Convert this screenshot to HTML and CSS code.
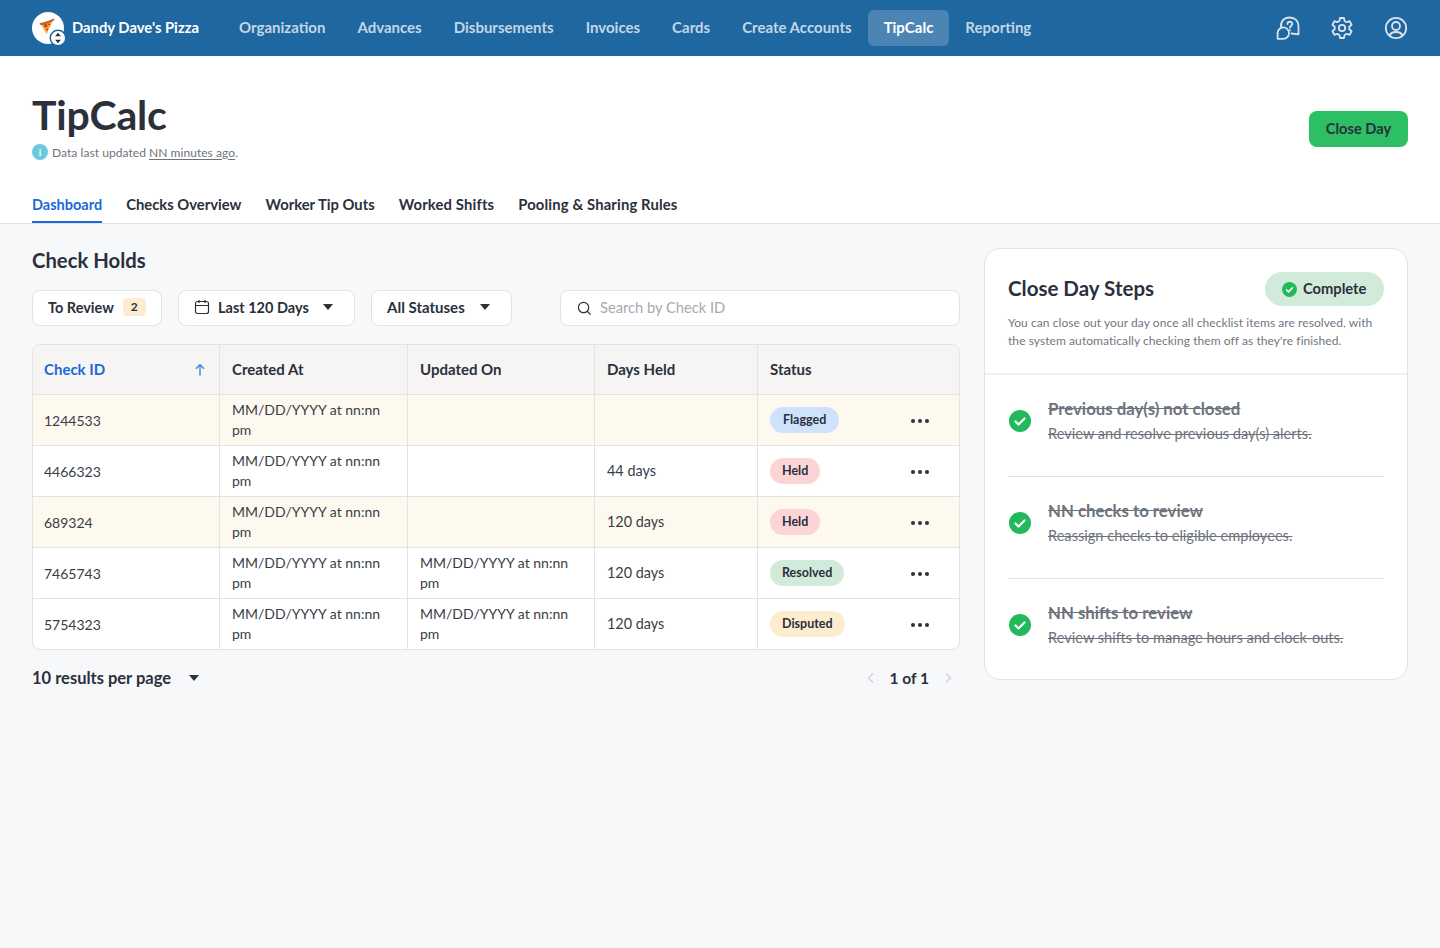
FILE: index.html
```html
<!DOCTYPE html>
<html lang="en">
<head>
<meta charset="utf-8">
<title>TipCalc</title>
<link rel="stylesheet" href="styles.css">
</head>
<body>
<header class="topbar">
  <div class="brand">
    <span class="logo">
      <svg class="pizza" viewBox="0 0 20 20"><path d="M1.500 6.500 17 1.500 9 19Z" fill="#f2b441"/><path d="M.8 5.800C6 5.200 12 3.500 16.500.5l2 1.800C13 6 7 7.800 2 8.500Z" fill="#c4602b"/><circle cx="8" cy="9" r="2.200" fill="#d63f2c"/><circle cx="12" cy="7.500" r="1.300" fill="#d63f2c"/><circle cx="9.500" cy="13.500" r="1.300" fill="#d63f2c"/></svg>
      <span class="switch"><svg viewBox="0 0 12 12"><path d="M6 1.500 8.500 4.500h-5ZM6 10.500 3.500 7.500h5Z" fill="#2a303c"/></svg></span>
    </span>
    <span class="brand-name">Dandy Dave's Pizza</span>
  </div>
  <nav class="mainnav">
    <a>Organization</a><a>Advances</a><a>Disbursements</a><a>Invoices</a><a>Cards</a><a>Create Accounts</a><a class="active">TipCalc</a><a>Reporting</a>
  </nav>
  <div class="topicons">
    <svg viewBox="0 0 24 24"><path d="M5 11C4.500 5.500 8 1.500 13.500 1.500c5.500 0 9 3.500 9 8.500v8.300l-7-.8" stroke-linejoin="round"/><path d="M11.500 8c0-3 4.800-3 4.800-.1 0 1.800-2.300 2-2.300 3.800M14 14.200v.1"/><path d="M1.600 22.800V17.500a5.700 5.700 0 1 1 5.700 5.300Z" stroke-linejoin="round"/></svg>
    <svg viewBox="0 0 24 24"><path d="M10 2h4l.6 3 2.100 1.200 2.900-1 2 3.500-2.300 2v2.600l2.300 2-2 3.500-2.900-1-2.100 1.200-.6 3h-4l-.6-3-2.100-1.200-2.900 1-2-3.500 2.300-2v-2.600l-2.300-2 2-3.500 2.900 1L9.400 5Z" stroke-linejoin="round"/><circle cx="12" cy="12" r="3.200"/></svg>
    <svg viewBox="0 0 24 24"><circle cx="12" cy="12" r="10.200"/><circle cx="12" cy="10" r="4"/><path d="M5.500 19.500c1-2.500 3-3.500 6.500-3.500s5.500 1 6.500 3.500"/></svg>
  </div>
</header>

<section class="pagehead">
  <div class="titlerow">
    <div>
      <h1>TipCalc</h1>
      <p class="updated"><span class="info">i</span>Data last updated <u>NN minutes ago</u>.</p>
    </div>
    <button class="closeday">Close Day</button>
  </div>
  <div class="tabs">
    <a class="active">Dashboard</a><a>Checks Overview</a><a>Worker Tip Outs</a><a>Worked Shifts</a><a>Pooling &amp; Sharing Rules</a>
  </div>
</section>

<main class="content">
  <section class="holds">
    <h2>Check Holds</h2>
    <div class="filters">
      <button class="filter f-review">To Review <span class="count">2</span></button>
      <button class="filter f-days"><svg class="cal" viewBox="0 0 16 16"><rect x="1.500" y="2.500" width="13" height="12" rx="2"/><path d="M1.500 6.500h13M5 1v3M11 1v3"/></svg>Last 120 Days<span class="caret"></span></button>
      <button class="filter f-status">All Statuses<span class="caret"></span></button>
      <div class="search"><svg viewBox="0 0 16 16"><circle cx="7" cy="7" r="5.500"/><path d="m11 11 3.500 3.500"/></svg><span>Search by Check ID</span></div>
    </div>
    <div class="tablewrap">
      <table>
        <colgroup><col class="c1"><col class="c2"><col class="c3"><col class="c4"><col class="c5"></colgroup>
        <thead><tr>
          <th class="sorted"><span class="thflex">Check ID<svg viewBox="0 0 12 12"><path d="M6 11V1.500M2.500 5 6 1.500 9.500 5"/></svg></span></th>
          <th>Created At</th><th>Updated On</th><th>Days Held</th><th>Status</th>
        </tr></thead>
        <tbody>
          <tr class="warn"><td>1244533</td><td>MM/DD/YYYY at nn:nn pm</td><td></td><td></td><td><div class="st"><span class="pill flagged">Flagged</span><span class="dots"><i></i><i></i><i></i></span></div></td></tr>
          <tr><td>4466323</td><td>MM/DD/YYYY at nn:nn pm</td><td></td><td>44 days</td><td><div class="st"><span class="pill held">Held</span><span class="dots"><i></i><i></i><i></i></span></div></td></tr>
          <tr class="warn"><td>689324</td><td>MM/DD/YYYY at nn:nn pm</td><td></td><td>120 days</td><td><div class="st"><span class="pill held">Held</span><span class="dots"><i></i><i></i><i></i></span></div></td></tr>
          <tr><td>7465743</td><td>MM/DD/YYYY at nn:nn pm</td><td>MM/DD/YYYY at nn:nn pm</td><td>120 days</td><td><div class="st"><span class="pill resolved">Resolved</span><span class="dots"><i></i><i></i><i></i></span></div></td></tr>
          <tr><td>5754323</td><td>MM/DD/YYYY at nn:nn pm</td><td>MM/DD/YYYY at nn:nn pm</td><td>120 days</td><td><div class="st"><span class="pill disputed">Disputed</span><span class="dots"><i></i><i></i><i></i></span></div></td></tr>
        </tbody>
      </table>
    </div>
    <div class="pager">
      <div class="perpage">10 results per page<span class="caret"></span></div>
      <div class="pages">
        <svg viewBox="0 0 10 12"><path d="M7 1.500 2.500 6 7 10.500"/></svg>
        <span>1 of 1</span>
        <svg viewBox="0 0 10 12"><path d="M3 1.500 7.500 6 3 10.500"/></svg>
      </div>
    </div>
  </section>

  <aside class="steps">
    <div class="stepshead">
      <div class="stepstop">
        <h2>Close Day Steps</h2>
        <span class="complete"><svg class="chk small" viewBox="0 0 22 22"><circle cx="11" cy="11" r="11"/><path d="m6.500 11.500 3 3 6-6"/></svg>Complete</span>
      </div>
      <p>You can close out your day once all checklist items are resolved, with the system automatically checking them off as they're finished.</p>
    </div>
    <ul class="steplist">
      <li><svg class="chk" viewBox="0 0 22 22"><circle cx="11" cy="11" r="11"/><path d="m6.500 11.500 3 3 6-6"/></svg><div><b>Previous day(s) not closed</b><span>Review and resolve previous day(s) alerts.</span></div></li>
      <li><svg class="chk" viewBox="0 0 22 22"><circle cx="11" cy="11" r="11"/><path d="m6.500 11.500 3 3 6-6"/></svg><div><b>NN checks to review</b><span>Reassign checks to eligible employees.</span></div></li>
      <li><svg class="chk" viewBox="0 0 22 22"><circle cx="11" cy="11" r="11"/><path d="m6.500 11.500 3 3 6-6"/></svg><div><b>NN shifts to review</b><span>Review shifts to manage hours and clock-outs.</span></div></li>
    </ul>
  </aside>
</main>
</body>
</html>
```
FILE: styles.css
```css
* { box-sizing: border-box; }
html, body { margin: 0; height: 100%; }
body {
  font-family: "Lato", "Noto Sans", sans-serif;
  color: #2a303c;
  background: #f7f8fa;
  font-size: 15px;
}
button { font: inherit; color: inherit; cursor: pointer; }
h1, h2, p, ul { margin: 0; padding: 0; }

/* top bar */
.topbar {
  height: 56px;
  background: #1f67a0;
  display: flex;
  align-items: center;
  padding: 0 32px;
}
.brand { display: flex; align-items: center; gap: 8px; width: 191px; flex: none; }
.logo { width: 32px; height: 32px; border-radius: 50%; background: #fff; display: flex; position: relative; align-items: center; justify-content: center; }
.pizza { width: 17px; height: 17px; margin: -4px 0 0 -1px; }
.switch { position: absolute; right: -1px; bottom: -1px; width: 14px; height: 14px; border-radius: 50%; background: #fff; box-shadow: 0 0 0 1.500px #1f67a0; display: flex; }
.brand-name { color: #fff; font-weight: 700; font-size: 14.800px; white-space: nowrap; padding-bottom: 2px; }
.mainnav { display: flex; flex: 1; }
.mainnav a { color: #c3d6e6; font-weight: 700; font-size: 15px; height: 36px; line-height: 34px; padding: 0 16px; border-radius: 6px; white-space: nowrap; }
.mainnav a.active { background: #4c85b3; color: #fff; }
.topicons { display: flex; gap: 30px; }
.topicons svg { width: 24px; height: 24px; fill: none; stroke: #d9e4ee; stroke-width: 1.800; stroke-linecap: round; }

/* page head */
.pagehead { background: #fff; border-bottom: 1px solid #dfe1e4; padding: 0 32px; height: 168px; display: flex; flex-direction: column; }
.titlerow { display: flex; justify-content: space-between; align-items: flex-start; padding-top: 34px; height: 133px; }
h1 { font-size: 41px; line-height: 50px; font-weight: 700; letter-spacing: -.2px; }
.updated { display: flex; align-items: center; font-size: 12px; letter-spacing: .06px; color: #6d737d; height: 16px; margin-top: 4px; }
.updated u { text-underline-offset: 2px; margin-left: 3px; }
.info { width: 16px; height: 16px; border-radius: 50%; background: #6cc9dc; color: #fff; font-size: 10px; font-weight: 700; text-align: center; line-height: 16px; margin-right: 4px; }
.closeday { background: #2cbf63; border: 0; border-radius: 8px; width: 99px; height: 36px; font-weight: 700; font-size: 14.700px; margin-top: 21px; padding: 0 0 2px; }
.tabs { display: flex; gap: 24px; }
.tabs a { font-size: 14.800px; font-weight: 700; height: 35px; line-height: 33px; white-space: nowrap; }
.tabs a:nth-child(4) { letter-spacing: .15px; }
.tabs a:nth-child(5) { letter-spacing: .15px; }
.tabs a.active { color: #1a6ad9; border-bottom: 2px solid #1a6ad9; font-size: 14.500px; }

/* content */
.content { display: grid; grid-template-columns: 928px 424px; gap: 24px; padding: 24px 32px; align-items: start; }
.holds h2 { font-size: 20.300px; font-weight: 700; line-height: 24px; }
.filters { display: flex; margin-top: 18px; height: 36px; }
.filter { background: #fff; border: 1px solid #e1e3e6; border-radius: 8px; height: 36px; font-weight: 700; font-size: 14.500px; display: flex; align-items: center; padding: 0 15px 2px; white-space: nowrap; }
.f-review { width: 130px; }
.f-days { width: 177px; margin-left: 16px; }
.f-status { width: 141px; margin-left: 16px; font-size: 15px; }
.count { background: #fcedd0; border-radius: 4px; width: 23px; height: 18px; font-size: 12px; font-weight: 700; line-height: 17px; margin-left: 9px; text-align: center; }
.cal { width: 16px; height: 16px; fill: none; stroke: #2a303c; stroke-width: 1.200; margin-right: 8px; }
.caret { width: 0; height: 0; border: 5.500px solid transparent; border-top: 6px solid #2a303c; border-bottom: 0; margin-left: auto; margin-right: 6px; }
.search { width: 400px; margin-left: 48px; background: #fff; border: 1px solid #e1e3e6; border-radius: 8px; display: flex; align-items: center; padding: 0 16px 2px; color: #a6aab0; font-size: 14.700px; }
.search svg { width: 15px; height: 15px; fill: none; stroke: #2a303c; stroke-width: 1.300; margin: 2px 8px 0 0; flex: none; }

.tablewrap { margin-top: 18px; background: #fff; border: 1px solid #e1e3e6; border-radius: 8px; overflow: hidden; }
table { border-collapse: separate; border-spacing: 0; table-layout: fixed; width: 926px; }
.c1 { width: 187px; } .c2 { width: 188px; } .c3 { width: 187px; } .c4 { width: 163px; } .c5 { width: 201px; }
th, td { text-align: left; padding: 0 12px; border-right: 1px solid #e1e3e6; border-bottom: 1px solid #e1e3e6; font-size: 14px; }
th:first-child, td:first-child { padding-left: 11px; }
th:last-child, td:last-child { border-right: 0; }
tbody tr:last-child td { border-bottom: 0; }
th { background: #f6f5f4; height: 50px; font-weight: 700; font-size: 15px; padding-bottom: 2px; }
td { height: 51px; line-height: 20px; font-weight: 400; color: #383e49; padding-bottom: 1px; }
td:first-child { padding-top: 1px; padding-bottom: 0; }
td:nth-child(4) { font-size: 14.400px; padding-bottom: 0; }
td:last-child { padding-bottom: 0; }
tbody tr:last-child td { height: 50px; }
.warn td { background: #fef9ee; }
.sorted { color: #1a6ad9; }
.thflex { display: flex; justify-content: space-between; align-items: center; }
.thflex svg { width: 14px; height: 14px; fill: none; stroke: #3b82e0; stroke-width: 1.200; margin-top: 2px; }
.st { display: flex; justify-content: space-between; align-items: center; margin: 2px 18px 0 0; }
.pill { display: inline-block; height: 26px; line-height: 26px; padding: 0 12px; border-radius: 13px; font-size: 12.500px; font-weight: 700; color: #2a303c; margin-top: -2px; }
.flagged { background: #cfe2fc; padding: 0 13px; }
.held { background: #fbd5d5; }
.resolved { background: #d2eada; }
.disputed { background: #fdeccf; }
.dots { display: flex; gap: 3px; }
.dots i { width: 4px; height: 4px; border-radius: 50%; background: #2a303c; }

.pager { display: flex; justify-content: space-between; align-items: center; margin-top: 16px; height: 24px; }
.perpage { font-size: 16.500px; font-weight: 700; display: flex; align-items: center; width: 167px; }
.perpage .caret { margin-right: 0; }
.pages { display: flex; align-items: center; gap: 14px; font-size: 15.500px; font-weight: 700; padding-right: 7px; }
.pages svg { width: 10px; height: 12px; fill: none; stroke: #d0d3d7; stroke-width: 1.500; }

/* side panel */
.steps { background: #fff; border: 1px solid #e1e3e6; border-radius: 16px; height: 432px; }
.stepshead { padding: 23px 23px 24px; border-bottom: 2px solid #eff0f2; height: 126px; }
.stepstop { display: flex; justify-content: space-between; align-items: center; height: 34px; }
.stepstop h2 { font-size: 20.500px; font-weight: 700; padding-bottom: 2px; }
.complete { background: #d2eada; border-radius: 17px; width: 119px; height: 34px; display: flex; align-items: center; padding: 0 0 2px 17px; font-weight: 700; font-size: 14.700px; }
.complete .chk { margin-top: 2px; }
.stepshead p { font-size: 12px; letter-spacing: .07px; line-height: 18px; color: #71767f; margin-top: 8px; }
.chk { width: 22px; height: 22px; flex: none; }
.chk circle { fill: #22b95b; }
.chk path { fill: none; stroke: #fff; stroke-width: 2.200; stroke-linecap: round; stroke-linejoin: round; }
.chk.small { width: 15px; height: 15px; margin-right: 6px; }
.steplist { list-style: none; padding: 0 23px; }
.steplist li { height: 102px; display: flex; align-items: center; gap: 17px; border-bottom: 1px solid #e1e3e6; color: #6d737d; padding: 0 0 10px 1px; }
.steplist li:last-child { border-bottom-color: transparent; }
.steplist div { display: flex; flex-direction: column; gap: 5px; text-decoration: line-through; margin-top: 2px; }
.steplist b { font-size: 16.800px; font-weight: 700; line-height: 20px; }
.steplist span { font-size: 14.600px; line-height: 20px; }
```
